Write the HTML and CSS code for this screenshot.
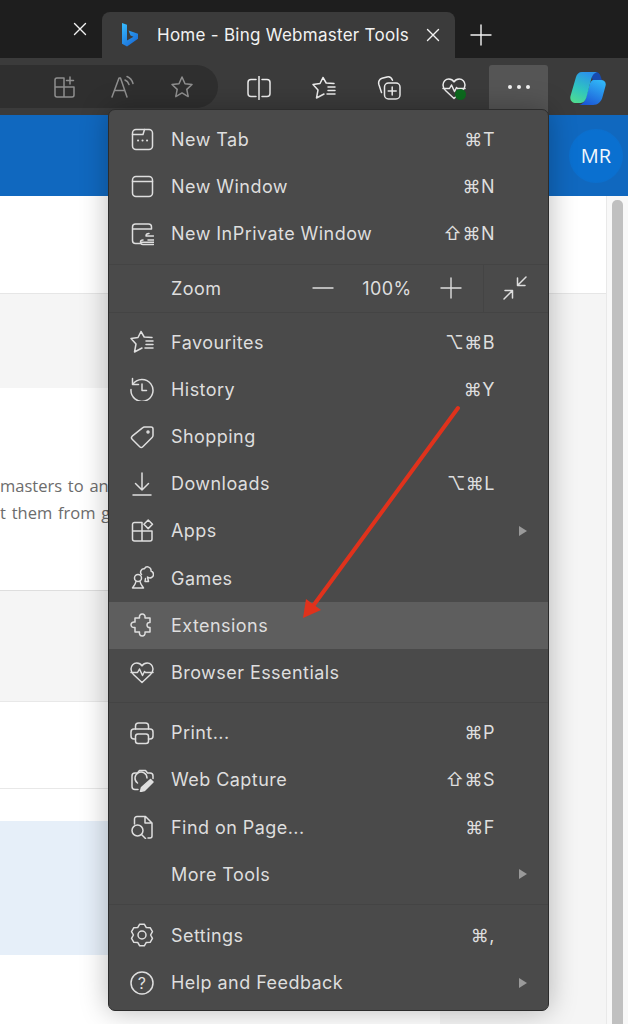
FILE: index.html
```html
<!DOCTYPE html>
<html lang="en">
<head>
    <meta charset="UTF-8">
    <meta name="viewport" content="width=device-width, initial-scale=1.0">
    <title>Home - Bing Webmaster Tools</title>
    <link rel="stylesheet" href="styles.css">
</head>
<body>
    <svg class="defs" width="0" height="0">
        <defs>
            <linearGradient id="bingFill" x1="0" y1="0" x2="0.6" y2="1">
                <stop offset="0" stop-color="#37bdff"/>
                <stop offset="1" stop-color="#1b6fd8"/>
            </linearGradient>
            <linearGradient id="copilotLeft" x1="0.6" y1="0" x2="0.2" y2="1">
                <stop offset="0" stop-color="#2b93ea"/>
                <stop offset="0.55" stop-color="#2fc4c0"/>
                <stop offset="1" stop-color="#4fdc90"/>
            </linearGradient>
            <linearGradient id="copilotRight" x1="0.7" y1="0" x2="0.2" y2="1">
                <stop offset="0" stop-color="#30b4f6"/>
                <stop offset="1" stop-color="#1a55d6"/>
            </linearGradient>
            <symbol id="icoFav" viewBox="0 0 24 24">
                <path d="M22 7.500L14.200 7 11 1.500 8 7.500 1 8.500 6 14 4.500 22 12 18"/>
                <path d="M16 11h7M16 14.500h7M15 18h8"/>
            </symbol>
            <symbol id="icoHeart" viewBox="0 0 24 24">
                <path d="M3.500 14.500C1.800 12.800 1 11 1 9c0-3.400 2.600-6 5.800-6 2.200 0 4 1 5.200 2.900C13.200 4 15 3 17.200 3 20.400 3 23 5.600 23 9c0 2-.8 3.800-2.500 5.500L12 22.500z"/>
                <path d="M1 12.500h6.500l2-3.500 3 6.500 2-4 1 1H23"/>
            </symbol>
        </defs>
    </svg>

    <div class="tabstrip">
        <div class="tab-stub">
            <svg class="tab-close" viewBox="0 0 14 14"><path d="M1.500 1.500l11 11M12.500 1.500l-11 11"/></svg>
        </div>
        <div class="tab">
            <svg class="bing" viewBox="0 0 16 24"><path fill="url(#bingFill)" d="M0 0l5 1.700v15.800l6.500-3.700-3-1.400-2-4.900L16 10.800v5L5 23.500l-5-2.700z"/></svg>
            <span class="tab-title">Home - Bing Webmaster Tools</span>
            <svg class="tab-close" viewBox="0 0 14 14"><path d="M1.500 1.500l11 11M12.500 1.500l-11 11"/></svg>
        </div>
        <svg class="tab-new" viewBox="0 0 22 22"><path d="M11 1v20M1 11h20"/></svg>
    </div>

    <div class="toolbar">
        <div class="addressbar">
            <svg class="ico ico-dim" viewBox="0 0 24 24"><path d="M12 8V3H5a2 2 0 0 0-2 2v15a2 2 0 0 0 2 2h15a2 2 0 0 0 2-2v-8H3M12 12v10M12 8v4h10"/><path d="M18 2v7M14.500 5.500h7"/></svg>
            <svg class="ico ico-dim" viewBox="0 0 24 24"><path d="M1 22L8 3h1.500l6.500 19M3.500 15.500h10"/><path d="M14 5c2 .8 3.200 2.200 4 4.500M16 1.500c3 1.200 5 3.500 6 7"/></svg>
            <svg class="ico ico-dim" viewBox="0 0 24 24"><path d="M12 2l3 6.700 7 .8-5.200 4.900 1.400 7.200L12 17.900l-6.200 3.700 1.400-7.200L2 9.500l7-.8z"/></svg>
        </div>
        <div class="tool"><svg class="ico" viewBox="0 0 24 24"><path d="M9 3.500H4a3 3 0 0 0-3 3v11a3 3 0 0 0 3 3h5M15 3.500h5a3 3 0 0 1 3 3v11a3 3 0 0 1-3 3h-5M12 .5v23"/></svg></div>
        <div class="tool"><svg class="ico"><use href="#icoFav"/></svg></div>
        <div class="tool"><svg class="ico" viewBox="0 0 24 24"><path d="M4.500 16.500l-2.600-8C1 5.500 2.500 3 5 2.300l5-1.300c2.500-.6 4.500.7 5.500 3.200"/><rect x="7.500" y="7" width="15.500" height="16" rx="4"/><path d="M15.200 11v8M11.200 15h8"/></svg></div>
        <div class="tool tool-health">
            <svg class="ico"><use href="#icoHeart"/></svg>
            <span class="health-dot"></span>
        </div>
        <div class="more-btn"><span></span><span></span><span></span></div>
        <svg class="copilot" viewBox="0 0 36 35">
            <path fill="#174bb0" d="M20 1h6c2 0 3.500 1.500 4.500 4l2 6-8 3z"/>
            <path fill="url(#copilotRight)" d="M24 9h7c3.500 0 5.500 2.500 4.500 6l-3 11c-1.200 4.500-4.500 8-9.500 8H9c3.500-.8 5.500-3 6.500-6l4-14c.7-3 2-5 4.500-5z"/>
            <path fill="url(#copilotLeft)" d="M12 1h15c-3 1-4.500 3-5.500 6l-5 19c-.8 3-3 6-6 6H6c-4 0-6.500-3-5.500-7L6 6c.8-3 3-5 6-5z"/>
        </svg>
    </div>

    <div class="site-bar">
        <div class="avatar">MR</div>
    </div>

    <div class="page">
        <div class="content">
            <div class="band band-top"></div>
            <div class="band card">
                <p class="card-text">masters to ana</p>
                <p class="card-text">t them from g</p>
            </div>
            <div class="band list-row"></div>
            <div class="band list-row list-row-short"></div>
            <div class="band selected-row"></div>
            <div class="band band-bottom"></div>
        </div>
        <div class="scrollbar"><div class="scroll-thumb"></div></div>
    </div>

    <div class="menu">
        <div class="menu-group">
            <div class="menu-item">
                <svg class="ico" viewBox="0 0 24 24"><rect x="2.500" y="1.500" width="20" height="20" rx="3.500"/><path d="M2.500 6.500h10.500l1.500-5"/><path class="dots" d="M8 12.500h.1M12.500 12.500h.1M17 12.500h.1"/></svg>
                <span class="label">New Tab</span><span class="keys">⌘T</span>
            </div>
            <div class="menu-item">
                <svg class="ico" viewBox="0 0 24 24"><rect x="2.500" y="1.500" width="20" height="20" rx="3.500"/><path d="M2.500 6.500h20"/></svg>
                <span class="label">New Window</span><span class="keys">⌘N</span>
            </div>
            <div class="menu-item">
                <svg class="ico" viewBox="0 0 24 24"><path d="M10 21.500H5.500A3 3 0 0 1 2.500 18.500V5a3 3 0 0 1 3-3h13a3 3 0 0 1 3 3v2M2.500 7h19"/><path d="M19 11.500c-1.800 0-3 1-3 2.500h7.500M18 18h6M13 18c-1.800 0-2.500 1-2.500 2s.8 2.500 2.500 2.500h10.500M12 20.200h12"/></svg>
                <span class="label">New InPrivate Window</span><span class="keys">⇧⌘N</span>
            </div>
        </div>
        <div class="menu-item zoom-row">
            <span class="ico-space"></span>
            <span class="label">Zoom</span>
            <div class="zoom-controls">
                <svg class="zoom-btn" viewBox="0 0 22 22"><path d="M1 11h20"/></svg>
                <span class="zoom-value">100%</span>
                <svg class="zoom-btn" viewBox="0 0 22 22"><path d="M11 1v20M1 11h20"/></svg>
            </div>
            <div class="zoom-fit">
                <svg class="ico" viewBox="0 0 24 24"><path d="M1 23l8-8M2 14.500h7.500V22"/><path d="M23 1l-8 8M22 9.500h-7.500V2"/></svg>
            </div>
        </div>
        <div class="menu-group">
            <div class="menu-item">
                <svg class="ico"><use href="#icoFav"/></svg>
                <span class="label">Favourites</span><span class="keys">⌥⌘B</span>
            </div>
            <div class="menu-item">
                <svg class="ico" viewBox="0 0 24 24"><path d="M2.500 1.500v6h6"/><path d="M2.800 7.300A11 11 0 1 1 1 12.500"/><path d="M12 7v6.500h4.500"/></svg>
                <span class="label">History</span><span class="keys">⌘Y</span>
            </div>
            <div class="menu-item">
                <svg class="ico" viewBox="0 0 24 24"><path d="M14.500 2H21a2 2 0 0 1 2 2v6.500a3 3 0 0 1-.9 2L12.800 21.800a2.200 2.200 0 0 1-3.100 0l-7.500-7.500a2.200 2.200 0 0 1 0-3.100l10.300-8.300a3 3 0 0 1 2-.9z"/><circle cx="18" cy="7" r="1"/></svg>
                <span class="label">Shopping</span>
            </div>
            <div class="menu-item">
                <svg class="ico" viewBox="0 0 24 24"><path d="M12 1v17M5.500 11.500L12 18l6.500-6.500M3 23h18"/></svg>
                <span class="label">Downloads</span><span class="keys">⌥⌘L</span>
            </div>
            <div class="menu-item">
                <svg class="ico" viewBox="0 0 24 24"><path d="M12 12H2.500V5.500a2 2 0 0 1 2-2H12zM2.500 12v8a2 2 0 0 0 2 2H12V12zM12 12h10v8a2 2 0 0 1-2 2h-8"/><path d="M18.200 1l4.300 4.300-4.300 4.300-4.300-4.300z"/></svg>
                <span class="label">Apps</span><i class="submenu-arrow"></i>
            </div>
            <div class="menu-item">
                <svg class="ico" viewBox="0 0 24 24"><circle cx="8" cy="12" r="3.500"/><path d="M6 15.500c-.3 2-1.500 3.500-3.500 6.500h11c-2-3-3.200-4.500-3.500-6.500"/><path d="M11.500 8.500a3.500 3.500 0 0 1 3-5.800 3.500 3.500 0 0 1 6.500 2.300 3.500 3.500 0 0 1 .5 6.500c-1.500.8-3 .3-4-.5l1 4.500h-3.500l.5-3"/></svg>
                <span class="label">Games</span>
            </div>
            <div class="menu-item is-hovered">
                <svg class="ico" viewBox="0 0 24 24"><path d="M5 5h4.500c-.5-2.500 1-4 2.700-4s3.300 1.500 2.800 4H20v4.500c-1.500-.5-3 .8-3 2.500s1.500 3 3 2.500V19h-5c.5 2.500-1 4-2.800 4s-3.200-1.500-2.700-4H5v-4.500c-2.500.5-4-1-4-2.700s1.500-3.300 4-2.800z"/></svg>
                <span class="label">Extensions</span>
            </div>
            <div class="menu-item">
                <svg class="ico"><use href="#icoHeart"/></svg>
                <span class="label">Browser Essentials</span>
            </div>
        </div>
        <div class="menu-group">
            <div class="menu-item">
                <svg class="ico" viewBox="0 0 24 24"><path d="M5.500 8V5a3 3 0 0 1 3-3h7a3 3 0 0 1 3 3v3"/><path d="M5.500 18H4a3 3 0 0 1-3-3v-4a3 3 0 0 1 3-3h16a3 3 0 0 1 3 3v4a3 3 0 0 1-3 3h-1.500"/><rect x="5.500" y="13" width="13" height="9.500" rx="2.500"/></svg>
                <span class="label">Print...</span><span class="keys">⌘P</span>
            </div>
            <div class="menu-item">
                <svg class="ico" viewBox="0 0 24 24"><path d="M8 21.500H5a3 3 0 0 1-3-3V8a3 3 0 0 1 3-3h2.500l2-2.500h6l2 2.500H20a3 3 0 0 1 3 3v2.500"/><path d="M7.500 15a6 6 0 1 1 9.500-5"/><path class="solid" d="M20.500 11.500l2.500 2.500-8.500 8.500-4 1 1-4z"/></svg>
                <span class="label">Web Capture</span><span class="keys">⇧⌘S</span>
            </div>
            <div class="menu-item">
                <svg class="ico" viewBox="0 0 24 24"><path d="M4.500 9V4a2.500 2.500 0 0 1 2.500-2.500h8.500L22 8v13a2 2 0 0 1-2 2h-2M15 1.500V8h7"/><circle cx="7.500" cy="15.500" r="5.500"/><path d="M11.500 19.500l4 4"/></svg>
                <span class="label">Find on Page...</span><span class="keys">⌘F</span>
            </div>
            <div class="menu-item">
                <span class="ico-space"></span>
                <span class="label">More Tools</span><i class="submenu-arrow"></i>
            </div>
        </div>
        <div class="menu-group menu-group-last">
            <div class="menu-item">
                <svg class="ico" viewBox="0 0 24 24"><path d="M9.700 1.200h4.600l2 3.350 3.870.09 2.290 3.960-1.860 3.400 1.860 3.400-2.290 3.960-3.870.09-2 3.350H9.700l-2-3.350-3.870-.09-2.290-3.960L3.400 12 1.540 8.600l2.290-3.960 3.870-.09z"/><circle cx="12" cy="12" r="4"/></svg>
                <span class="label">Settings</span><span class="keys">⌘,</span>
            </div>
            <div class="menu-item">
                <svg class="ico" viewBox="0 0 24 24"><circle cx="12" cy="12" r="11"/><text class="help-mark" x="12" y="18" text-anchor="middle">?</text></svg>
                <span class="label">Help and Feedback</span><i class="submenu-arrow"></i>
            </div>
        </div>
    </div>

    <!-- red annotation arrow on top of the screenshot -->
    <svg class="annotation" viewBox="0 0 628 1024">
        <path d="M458 408L313 606" stroke="#e0321c" stroke-width="4" fill="none"/>
        <path d="M303 618l3-19 15 11z" fill="#e0321c"/>
    </svg>
</body>
</html>
```

FILE: styles.css
```css
* {
    margin: 0;
    padding: 0;
    box-sizing: border-box;
}

body {
    position: relative;
    width: 628px;
    height: 1024px;
    overflow: hidden;
    background-color: #f5f5f5;
    font-family: 'Inter', 'DejaVu Sans', sans-serif;
}

.defs {
    position: absolute;
}

svg {
    display: block;
    flex: none;
    fill: none;
    stroke: currentColor;
    stroke-linecap: round;
    stroke-linejoin: round;
}

.ico {
    width: 24px;
    height: 24px;
    stroke-width: 1.5;
}

.ico-dim {
    color: #8f8f8f;
}

/* tab strip */
.tabstrip {
    display: flex;
    height: 58px;
    background-color: #1e1e1e;
    color: #f2f2f2;
}

.tab-stub {
    display: flex;
    align-items: center;
    justify-content: flex-end;
    width: 102px;
    padding-right: 15px;
}

.tab-close {
    width: 14px;
    height: 14px;
    stroke-width: 1.4;
}

.tab {
    display: flex;
    align-items: center;
    width: 353px;
    margin-top: 12px;
    padding: 0 15px 0 20px;
    background-color: #3b3b3b;
    border-radius: 8px 8px 0 0;
}

.bing {
    width: 16px;
    height: 24px;
    stroke: none;
}

.tab-title {
    flex: 1;
    margin-left: 19px;
    font-size: 17px;
    letter-spacing: 0.27px;
    white-space: nowrap;
}

.tab-new {
    width: 22px;
    height: 22px;
    margin: 24px 0 0 15px;
    stroke-width: 1.4;
}

/* toolbar */
.toolbar {
    display: flex;
    align-items: flex-start;
    height: 57px;
    background-color: #3b3b3b;
    color: #ececec;
}

.addressbar {
    display: flex;
    align-items: center;
    gap: 35px;
    width: 218px;
    height: 43px;
    margin: 7px 8px 0 0;
    padding-left: 52px;
    background-color: #2f2f2f;
    border-radius: 0 22px 22px 0;
}

.tool {
    position: relative;
    display: flex;
    justify-content: center;
    width: 65px;
    padding-top: 18px;
}

.health-dot {
    position: absolute;
    left: 34px;
    top: 31px;
    width: 11px;
    height: 11px;
    background-color: #0c6b1e;
    border-radius: 50%;
}

.more-btn {
    display: flex;
    align-items: center;
    justify-content: center;
    gap: 5px;
    width: 59px;
    height: 50px;
    margin: 7px 0 0 3px;
    padding-bottom: 6px;
    background-color: #555;
    border-radius: 3px 3px 0 0;
}

.more-btn span {
    width: 4px;
    height: 4px;
    background-color: #f2f2f2;
    border-radius: 50%;
}

.copilot {
    width: 36px;
    height: 35px;
    margin: 13px 0 0 22px;
    stroke: none;
}

/* page behind the menu */
.site-bar {
    display: flex;
    align-items: center;
    justify-content: flex-end;
    height: 81px;
    padding-right: 5px;
    background-color: #1068bf;
}

.avatar {
    width: 54px;
    height: 54px;
    background: radial-gradient(circle, #0a70d0 65%, #1068bf 100%);
    border-radius: 50%;
    color: #f2f8fd;
    font-family: 'Open Sans', sans-serif;
    font-size: 20px;
    line-height: 54px;
    text-align: center;
}

.page {
    display: flex;
    height: 828px;
}

.content {
    width: 607px;
    border-right: 1px solid #e9e9e9;
}

.band {
    width: 440px;
    background-color: #fff;
}

.band-top {
    width: 100%;
    height: 98px;
    border-bottom: 1px solid #e6e6e6;
}

.card {
    height: 203px;
    margin-top: 94px;
    padding-top: 84px;
    border-bottom: 1px solid #dedede;
}

.card-text {
    color: #6c6c6c;
    font-family: 'Open Sans', sans-serif;
    font-size: 16.500px;
    line-height: 27px;
    word-spacing: 1.500px;
    white-space: nowrap;
}

.list-row {
    height: 87px;
    margin-top: 110px;
    border-top: 1px solid #e8e8e8;
}

.list-row-short {
    height: 33px;
    margin-top: 0;
}

.selected-row {
    height: 134px;
    background-color: #e6eff9;
}

.band-bottom {
    height: 69px;
}

.scrollbar {
    width: 21px;
    padding: 4px 5px 0 5px;
    background-color: #f8f8f8;
}

.scroll-thumb {
    height: 100%;
    background-color: #c0c0c0;
    border-radius: 5px 5px 0 0;
}

/* dropdown menu, sits over the page */
.menu {
    position: absolute;
    left: 108px;
    top: 109px;
    width: 441px;
    height: 902px;
    background-color: #4a4a4a;
    border: 1px solid #2c2c2c;
    border-radius: 7px;
    box-shadow: 0 0 28px rgba(0, 0, 0, 0.28);
    color: #dedede;
    font-size: 18px;
    letter-spacing: 0.45px;
}

.menu-group {
    padding: 6px 0;
    border-bottom: 1px solid #444;
}

.menu-group-last {
    padding-top: 7px;
    border-bottom: none;
}

.menu-item {
    display: flex;
    align-items: center;
    height: 47.200px;
    padding: 0 53px 0 21px;
}

.menu-item.is-hovered {
    background-color: #5e5e5e;
}

.ico-space {
    width: 24px;
    flex: none;
}

.label {
    flex: 1;
    margin-left: 17px;
    white-space: nowrap;
}

.keys {
    letter-spacing: 0.5px;
    white-space: nowrap;
}

.dots {
    stroke-width: 2;
}

.solid {
    fill: #dedede;
}

.help-mark {
    fill: currentColor;
    stroke: none;
    font-family: 'Inter', sans-serif;
    font-size: 16px;
}

.submenu-arrow {
    width: 0;
    height: 0;
    margin-right: -32px;
    border-left: 8px solid #9a9a9a;
    border-top: 5px solid transparent;
    border-bottom: 5px solid transparent;
}

.zoom-row {
    height: 48px;
    padding-right: 0;
    border-bottom: 1px solid #444;
}

.zoom-controls {
    display: flex;
    align-items: center;
    width: 150px;
    margin-right: 21px;
    justify-content: space-between;
}

.zoom-btn {
    width: 22px;
    height: 22px;
    stroke-width: 1.4;
}

.zoom-fit {
    display: flex;
    align-items: center;
    height: 100%;
    padding: 0 21px 0 19px;
    border-left: 1px solid #444;
}

.annotation {
    position: absolute;
    left: 0;
    top: 0;
    width: 628px;
    height: 1024px;
    stroke: none;
}
```
